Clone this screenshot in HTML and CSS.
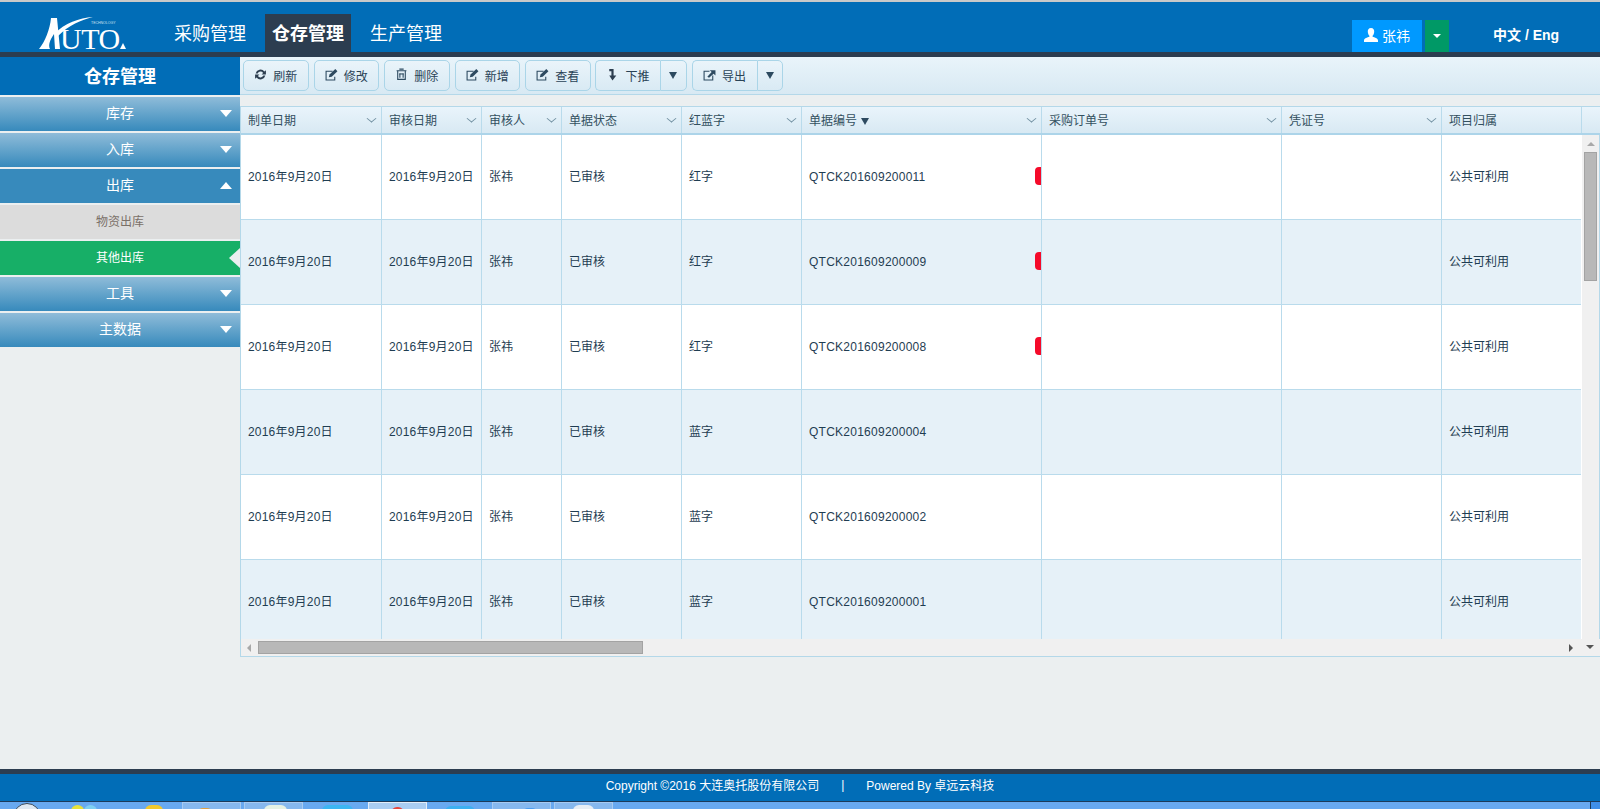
FILE: index.html
```html
<!DOCTYPE html>
<html lang="zh-CN">
<head>
  <meta charset="UTF-8">
  <title>仓存管理</title>
  <link rel="stylesheet" href="styles.css">
</head>
<body>
  <header class="topbar">
    <div class="logo">
      <svg width="94" height="42" viewBox="0 0 94 42">
        <path d="M0 35 C6 28 11 15 12 4 L18 4 L21 35 L16 35 L15 20 C11 26 9 31 11 35 Z" fill="#fff"/>
        <path d="M15 20 C26 9 40 4 54 3 C42 6 30 11 19 22 Z" fill="#fff"/>
        <text x="21" y="35" class="logo-word">UTO</text>
        <text x="52" y="10" class="logo-small">TECHNOLOGY</text>
        <path d="M81 35 L84 29 L87 35 Z" fill="#fff"/>
      </svg>
    </div>
    <nav class="nav">
      <a class="nav-item">采购管理</a>
      <a class="nav-item active">仓存管理</a>
      <a class="nav-item">生产管理</a>
    </nav>
    <div class="user">
      <span class="user-btn">
        <svg width="14" height="14" viewBox="0 0 14 14"><path d="M7 0 C9.4 0 10.4 1.8 10.2 4 C10 6 9.2 7.2 8.6 7.8 L8.6 8.8 C10.6 9.6 14 10.4 14 12.4 L14 14 L0 14 L0 12.4 C0 10.4 3.4 9.6 5.4 8.8 L5.4 7.8 C4.8 7.2 4 6 3.8 4 C3.6 1.8 4.6 0 7 0 Z" fill="#fff"/></svg>
        张祎
      </span>
      <span class="user-drop"><i class="caret-down"></i></span>
    </div>
    <div class="lang">中文 / Eng</div>
  </header>

  <div class="main">
    <aside class="sidebar">
      <h2 class="side-title">仓存管理</h2>
      <div class="menu">
        <a class="menu-item">库存<i class="arrow"></i></a>
        <a class="menu-item">入库<i class="arrow"></i></a>
        <a class="menu-item open">出库<i class="arrow up"></i></a>
        <a class="sub-item">物资出库</a>
        <a class="sub-item current">其他出库</a>
        <a class="menu-item">工具<i class="arrow"></i></a>
        <a class="menu-item">主数据<i class="arrow"></i></a>
      </div>
    </aside>

    <section class="content">
      <div class="toolbar">
        <button class="btn">
          <svg class="ico" viewBox="0 0 12 12"><path d="M1.5 5 A4.6 4.6 0 0 1 9.6 3.2 L11 2 L11 6 L7 6 L8.4 4.6 A2.8 2.8 0 0 0 3.4 5 Z M10.5 7 A4.6 4.6 0 0 1 2.4 8.8 L1 10 L1 6 L5 6 L3.6 7.4 A2.8 2.8 0 0 0 8.6 7 Z" fill="#2d3e50"/></svg>
          刷新
        </button>
        <button class="btn">
          <svg class="ico" viewBox="0 0 12 12"><path d="M7 3 H1 V11 H9 V8" fill="none" stroke="#2d4a60"/><path d="M3.5 8.5 L4.2 6 L9.5 1 L11.5 3 L6.2 8 Z" fill="#2d4a60"/></svg>
          修改
        </button>
        <button class="btn">
          <svg class="ico" viewBox="0 0 12 12"><path d="M1.5 2.5 H10.5 M4 1 H8 M2.5 3 V10.5 H9.5 V3 M4.5 5 V9 M7.5 5 V9" fill="none" stroke="#2d4a60"/><path d="M4 5 H8 V6 H4 Z" fill="#2d4a60"/></svg>
          删除
        </button>
        <button class="btn">
          <svg class="ico" viewBox="0 0 12 12"><path d="M7 3 H1 V11 H9 V8" fill="none" stroke="#2d4a60"/><path d="M3.5 8.5 L4.2 6 L9.5 1 L11.5 3 L6.2 8 Z" fill="#2d4a60"/></svg>
          新增
        </button>
        <button class="btn">
          <svg class="ico" viewBox="0 0 12 12"><path d="M7 3 H1 V11 H9 V8" fill="none" stroke="#2d4a60"/><path d="M3.5 8.5 L4.2 6 L9.5 1 L11.5 3 L6.2 8 Z" fill="#2d4a60"/></svg>
          查看
        </button>
        <div class="btn-group">
          <button class="btn split">
            <svg class="ico" viewBox="0 0 12 12"><path d="M3 1 H7 V7 H9.5 L6 11.5 L3 7 H5 V3 H3 Z" fill="#2d3e50"/></svg>
            下推
          </button>
          <button class="btn drop"><i class="tri"></i></button>
        </div>
        <div class="btn-group">
          <button class="btn split">
            <svg class="ico" viewBox="0 0 12 12"><path d="M6 3 H1 V11 H9 V7" fill="none" stroke="#2d4a60"/><path d="M4 8 L8 3.6 L6.2 2 H11.5 V7 L9.8 5.4 L5.6 9 Z" fill="#2d4a60"/></svg>
            导出
          </button>
          <button class="btn drop"><i class="tri"></i></button>
        </div>
      </div>

      <div class="grid">
        <div class="grid-head">
          <div class="th c1">制单日期<i class="chev"></i></div>
          <div class="th c2">审核日期<i class="chev"></i></div>
          <div class="th c3">审核人<i class="chev"></i></div>
          <div class="th c4">单据状态<i class="chev"></i></div>
          <div class="th c5">红蓝字<i class="chev"></i></div>
          <div class="th c6">单据编号<i class="sorted"></i><i class="chev"></i></div>
          <div class="th c7">采购订单号<i class="chev"></i></div>
          <div class="th c8">凭证号<i class="chev"></i></div>
          <div class="th c9">项目归属</div>
          <div class="th c10"></div>
        </div>
        <div class="grid-mid">
          <div class="grid-rows">
            <div class="row">
              <div class="td c1">2016年9月20日</div><div class="td c2">2016年9月20日</div><div class="td c3">张祎</div><div class="td c4">已审核</div><div class="td c5">红字</div>
              <div class="td c6">QTCK201609200011<i class="tag"></i></div><div class="td c7"></div><div class="td c8"></div><div class="td c9 last">公共可利用</div>
            </div>
            <div class="row">
              <div class="td c1">2016年9月20日</div><div class="td c2">2016年9月20日</div><div class="td c3">张祎</div><div class="td c4">已审核</div><div class="td c5">红字</div>
              <div class="td c6">QTCK201609200009<i class="tag"></i></div><div class="td c7"></div><div class="td c8"></div><div class="td c9 last">公共可利用</div>
            </div>
            <div class="row">
              <div class="td c1">2016年9月20日</div><div class="td c2">2016年9月20日</div><div class="td c3">张祎</div><div class="td c4">已审核</div><div class="td c5">红字</div>
              <div class="td c6">QTCK201609200008<i class="tag"></i></div><div class="td c7"></div><div class="td c8"></div><div class="td c9 last">公共可利用</div>
            </div>
            <div class="row">
              <div class="td c1">2016年9月20日</div><div class="td c2">2016年9月20日</div><div class="td c3">张祎</div><div class="td c4">已审核</div><div class="td c5">蓝字</div>
              <div class="td c6">QTCK201609200004</div><div class="td c7"></div><div class="td c8"></div><div class="td c9 last">公共可利用</div>
            </div>
            <div class="row">
              <div class="td c1">2016年9月20日</div><div class="td c2">2016年9月20日</div><div class="td c3">张祎</div><div class="td c4">已审核</div><div class="td c5">蓝字</div>
              <div class="td c6">QTCK201609200002</div><div class="td c7"></div><div class="td c8"></div><div class="td c9 last">公共可利用</div>
            </div>
            <div class="row">
              <div class="td c1">2016年9月20日</div><div class="td c2">2016年9月20日</div><div class="td c3">张祎</div><div class="td c4">已审核</div><div class="td c5">蓝字</div>
              <div class="td c6">QTCK201609200001</div><div class="td c7"></div><div class="td c8"></div><div class="td c9 last">公共可利用</div>
            </div>
          </div>
          <div class="vscroll">
            <i class="sb-up"></i>
            <div class="vthumb"></div>
          </div>
        </div>
        <div class="hscroll">
          <i class="sb-left"></i>
          <div class="hthumb"></div>
          <i class="sb-right"></i>
        </div>
      </div>
    </section>
  </div>

  <footer class="footer">
    <span>Copyright ©2016 大连奥托股份有限公司</span>
    <span class="sep">|</span>
    <span>Powered By 卓远云科技</span>
  </footer>

  <div class="taskbar">
    <i class="task-orb"></i>
    <i class="blob yellow"></i>
    <i class="blob sky"></i>
    <i class="blob ie"></i>
    <div class="task-btn first"><i class="blob orange"></i></div>
    <div class="task-btn"><i class="blob leaf"></i></div>
    <i class="blob folder"></i>
    <div class="task-btn on"><i class="blob red"></i></div>
    <i class="blob mail"></i>
    <div class="task-btn next"><i class="blob note"></i></div>
    <div class="task-btn last-btn"><i class="blob paper"></i></div>
    <i class="task-end"></i>
  </div>
</body>
</html>
```

FILE: styles.css
```css
* {
  box-sizing: border-box;
}

html, body {
  height: 100%;
}

body {
  margin: 0;
  display: flex;
  flex-direction: column;
  overflow: hidden;
  background: #ebeff0;
  font-family: "Liberation Sans", "Noto Sans CJK SC", sans-serif;
  font-size: 12px;
  color: #2a4356;
}

i {
  display: block;
  font-style: normal;
}

/* top bar */
.topbar {
  height: 57px;
  flex: none;
  display: flex;
  align-items: flex-end;
  background: #016db7;
  border-top: 2px solid #c9c9c9;
  border-bottom: 5px solid #2c3d50;
  color: #fff;
}

.logo {
  width: 167px;
  height: 38px;
  padding-left: 39px;
  flex: none;
}

.logo svg {
  display: block;
}

.logo-word {
  font-family: "Liberation Serif", serif;
  font-size: 30px;
  fill: #fff;
  letter-spacing: -0.5px;
}

.logo-small {
  font-family: "Liberation Sans", sans-serif;
  font-size: 3.5px;
  fill: #cfe2f0;
}

.nav {
  display: flex;
  gap: 12px;
  height: 38px;
}

.nav-item {
  padding: 0 7px;
  width: 86px;
  font-size: 18px;
  line-height: 41px;
  white-space: nowrap;
}

.nav-item.active {
  background: #2c3d50;
  font-weight: bold;
}

.user {
  margin-left: auto;
  display: flex;
  gap: 3px;
  height: 32px;
}

.user-btn {
  width: 70px;
  padding-bottom: 2px;
  display: flex;
  align-items: center;
  justify-content: center;
  gap: 4px;
  background: #0099ff;
  font-size: 14px;
}

.user-drop {
  width: 24px;
  display: flex;
  align-items: center;
  justify-content: center;
  background: #009966;
}

.caret-down {
  width: 0;
  height: 0;
  border: 4px solid transparent;
  border-top-color: #fff;
  border-bottom: 0;
}

.lang {
  width: 151px;
  height: 32px;
  padding-left: 44px;
  font-size: 14px;
  font-weight: bold;
  line-height: 30px;
}

/* sidebar */
.main {
  flex: 1;
  display: flex;
  min-height: 0;
}

.sidebar {
  width: 240px;
  flex: none;
}

.side-title {
  margin: 0;
  height: 38px;
  background: #016db7;
  color: #fff;
  font-size: 18px;
  line-height: 40px;
  text-align: center;
}

.menu {
  display: flex;
  flex-direction: column;
  gap: 2px;
  padding-top: 2px;
}

.menu-item, .sub-item {
  height: 34px;
  position: relative;
  display: block;
  text-align: center;
  line-height: 34px;
  color: #fff;
}

.menu-item {
  background: linear-gradient(#8fbcd9, #378abc);
  font-size: 14px;
  line-height: 32px;
}

.menu-item.open {
  background: #378abc;
}

.sub-item {
  background: #dcdcdc;
  color: #7a7068;
}

.sub-item.current {
  background: #17af67;
  color: #fff;
}

.sub-item.current::after {
  content: "";
  position: absolute;
  right: 0;
  top: 7px;
  border: 10px solid transparent;
  border-left: 0;
  border-right: 11px solid #ebeff0;
}

.arrow {
  position: absolute;
  right: 8px;
  top: 13px;
  width: 0;
  height: 0;
  border: 6px solid transparent;
  border-top: 7px solid #fff;
  border-bottom: 0;
}

.arrow.up {
  border-top: 0;
  border-bottom: 7px solid #fff;
}

/* toolbar */
.content {
  flex: 1;
  min-width: 0;
}

.toolbar {
  height: 38px;
  display: flex;
  gap: 5px;
  padding: 3px 0 0 3px;
  background: linear-gradient(#e9f4fa, #d8e9f3);
  border-bottom: 1px solid #b4d8e9;
}

.btn {
  width: 65.5px;
  height: 31px;
  padding: 0;
  display: flex;
  align-items: center;
  justify-content: center;
  gap: 6px;
  background: linear-gradient(#eaf4fa, #d9eaf4);
  border: 1px solid #aad5e8;
  border-radius: 5px;
  font-family: inherit;
  font-size: 12px;
  color: #2a4356;
}

.ico {
  width: 13px;
  height: 13px;
  flex: none;
  margin-top: -3px;
}

.btn-group {
  display: flex;
}

.btn-group:first-of-type {
  margin-left: -0.5px;
}

.btn.split {
  width: 65px;
  border-radius: 5px 0 0 5px;
  border-right: 0;
}

.btn.drop {
  width: 26.5px;
  border-radius: 0 5px 5px 0;
}

.tri {
  width: 0;
  height: 0;
  border: 4px solid transparent;
  border-top: 7px solid #2d4a60;
  border-bottom: 0;
}

/* grid */
.grid {
  margin-top: 11px;
  height: 551px;
  display: flex;
  flex-direction: column;
  border-left: 1px solid #b4d8e9;
  border-bottom: 1px solid #b4d8e9;
  background: #f0f0f0;
}

.grid-head {
  height: 29px;
  flex: none;
  display: flex;
  background: linear-gradient(#e9f4fb, #d8e9f3);
  border-top: 1px solid #b4d8e9;
  border-bottom: 2px solid #acd4e9;
}

.th, .td {
  flex: none;
  height: 100%;
  padding-left: 7px;
  border-right: 1px solid #b9dbec;
}

.th {
  position: relative;
  line-height: 28px;
  color: #33505f;
}

.td {
  position: relative;
  line-height: 84px;
  color: #1f3d52;
}

.td.c1, .td.c2 {
  letter-spacing: 0.2px;
}

.td.c6 {
  letter-spacing: 0.25px;
}

.c1 { width: 141px; }
.c2 { width: 100px; }
.c3 { width: 80px; }
.c4 { width: 120px; }
.c5 { width: 120px; }
.c6 { width: 240px; }
.c7 { width: 240px; }
.c8 { width: 160px; }
.c9 { width: 140px; }
.c10 { width: 18px; border-right: 0; }
.td.last { border-right: 0; }

.chev {
  position: absolute;
  right: 6px;
  top: 8px;
  width: 7px;
  height: 7px;
  border-right: 1.5px solid #6f8ea0;
  border-bottom: 1.5px solid #6f8ea0;
  transform: scaleY(0.8) rotate(45deg);
}

.sorted {
  display: inline-block;
  margin-left: 4px;
  width: 0;
  height: 0;
  border: 4px solid transparent;
  border-top: 7px solid #2d4a60;
  border-bottom: 0;
}

.grid-mid {
  flex: 1;
  min-height: 0;
  display: flex;
}

.grid-rows {
  flex: none;
  width: 1340px;
  height: 100%;
  overflow: hidden;
}

.row {
  height: 85px;
  display: flex;
  background: #fff;
  border-bottom: 1px solid #b9dbec;
}

.row:nth-child(even) {
  background: #e6f1f8;
}

.row:last-child {
  border-bottom: 0;
}

.tag {
  position: absolute;
  right: 0;
  top: 32px;
  width: 6px;
  height: 18px;
  background: #f50a2a;
  border-radius: 4px 0 0 4px;
}

/* scrollbars */
.vscroll {
  width: 19px;
  flex: none;
  display: flex;
  flex-direction: column;
  align-items: center;
  background: #f0f0f0;
  border-left: 1px solid #fff;
  border-right: 1px solid #b4d8e9;
}

.sb-up {
  margin: 7px 0 6px;
  border: 4px solid transparent;
  border-top: 0;
  border-bottom: 4px solid #a8a8a8;
}

.vthumb {
  width: 13px;
  height: 129px;
  background: #b8b8b8;
  border: 1px solid #a3a3a3;
}

.hscroll {
  height: 17px;
  flex: none;
  display: flex;
  align-items: center;
  background: #f0f0f0;
  position: relative;
}

.sb-left {
  margin: 0 7px 0 6px;
  border: 4px solid transparent;
  border-left: 0;
  border-right: 4px solid #a8a8a8;
}

.hthumb {
  width: 385px;
  height: 13px;
  background: #b8b8b8;
  border: 1px solid #a3a3a3;
}

.sb-right {
  margin-left: auto;
  margin-right: 27px;
  border: 4px solid transparent;
  border-right: 0;
  border-left: 4px solid #555;
}

.hscroll::after {
  content: "";
  position: absolute;
  right: 6px;
  top: 6px;
  border: 4px solid transparent;
  border-bottom: 0;
  border-top: 4px solid #555;
}

/* footer */
.footer {
  height: 32px;
  flex: none;
  display: flex;
  justify-content: center;
  align-items: center;
  padding-bottom: 6px;
  background: #016db7;
  border-top: 5px solid #2c3d50;
  color: #fff;
}

.sep {
  margin: 0 22px;
}

/* os taskbar peeking in at the bottom */
.taskbar {
  height: 8px;
  flex: none;
  display: flex;
  align-items: flex-start;
  overflow: hidden;
  background: #68a9f0;
  border-top: 1px solid #1c3a5a;
  position: relative;
}

.task-orb {
  width: 28px;
  height: 28px;
  margin: 1px 0 0 13px;
  flex: none;
  background: #dfe9f2;
  border: 1px solid #3a4a5a;
  border-radius: 50%;
}

.blob {
  flex: none;
  height: 12px;
  border-radius: 6px 6px 0 0;
}

.blob.yellow { width: 13px; margin: 3px 0 0 30px; background: #e8e23a; border-radius: 50%; }
.blob.sky { width: 13px; margin: 3px 0 0 0; background: #7fd0f2; border-radius: 50%; }
.blob.ie { width: 18px; margin: 3px 0 0 48px; background: #f2c82c; }
.blob.orange { width: 16px; margin: 5px 0 0 14px; background: #e0a040; }
.blob.leaf { width: 23px; margin: 2px 0 0 19px; background: #e6f2e4; }
.blob.folder { width: 31px; margin: 3px 0 0 19px; background: #3cb6f2; }
.blob.red { width: 13px; margin: 4px 0 0 22px; background: #e8453c; }
.blob.mail { width: 30px; margin: 4px 0 0 18px; background: #3cb0f0; }
.blob.note { width: 16px; margin: 5px 0 0 29px; background: #4a9cf0; }
.blob.paper { width: 21px; margin: 2px 0 0 18px; background: #e8eef4; }

.task-btn {
  width: 59px;
  height: 8px;
  margin-left: 3px;
  flex: none;
  display: flex;
  background: #86b8ee;
  border: 1px solid #a7cbf2;
  border-bottom: 0;
}

.task-btn.first {
  margin-left: 19px;
}

.task-btn.on {
  margin-left: 15px;
  background: #a9cdf2;
  border-color: #e2eefa;
}

.task-btn.next {
  margin-left: 17px;
}

.task-end {
  position: absolute;
  right: 0;
  top: 0;
  width: 10px;
  height: 8px;
  background: #3f8fe8;
  border-left: 1px solid #1c3a5a;
}
```
